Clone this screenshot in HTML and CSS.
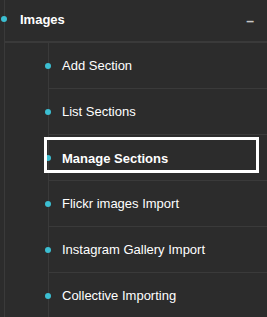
FILE: index.html
```html
<!DOCTYPE html>
<html lang="en">
<head>
    <meta charset="utf-8">
    <title>Images menu</title>
    <link rel="stylesheet" href="styles.css">
</head>
<body>
    <ul class="menu">
        <li class="menu-item">
            <a class="menu-link" href="#">Images<span class="toggle">–</span></a>
            <ul class="submenu">
                <li><a href="#">Add Section</a></li>
                <li><a href="#">List Sections</a></li>
                <li><a class="active" href="#">Manage Sections</a></li>
                <li><a href="#">Flickr images Import</a></li>
                <li><a href="#">Instagram Gallery Import</a></li>
                <li><a href="#">Collective Importing</a></li>
            </ul>
        </li>
    </ul>
</body>
</html>
```

FILE: styles.css
```css
body {
    margin: 0;
    padding: 0;
    background-color: #2c2c2c;
    font-family: "Liberation Sans", Arial, sans-serif;
    font-size: 13px;
    color: #fff;
    overflow: hidden;
}

ul {
    list-style: none;
    margin: 0;
    padding: 0;
}

a {
    color: #fff;
    text-decoration: none;
}

.menu {
    margin-left: 4px;
    border-left: 1px solid #3a3a3a;
    min-height: 100vh;
}

.menu-link {
    position: relative;
    display: flex;
    align-items: center;
    justify-content: space-between;
    height: 39px;
    padding: 0 13px 2px 15px;
    border-bottom: 2px solid #3a3a3a;
    font-weight: bold;
}

.menu-link::before,
.submenu a::before {
    content: "";
    position: absolute;
    width: 6px;
    height: 6px;
    border-radius: 50%;
    background-color: #3cbfd2;
}

.menu-link::before {
    left: -4px;
    top: 16px;
}

.toggle {
    color: #c8c8c8;
    font-size: 14px;
    font-weight: 900;
    padding-top: 3px;
}

.submenu {
    margin-left: 43px;
    border-left: 1px solid #3a3a3a;
}

.submenu li {
    border-bottom: 1px solid #3a3a3a;
}

.submenu a {
    position: relative;
    display: flex;
    align-items: center;
    height: 45px;
    padding-left: 13px;
}

.submenu a::before {
    left: -4px;
    top: 20px;
}

.submenu a.active {
    font-weight: bold;
    padding-top: 1px;
    height: 44px;
}

.submenu a.active::after {
    content: "";
    position: absolute;
    top: 2px;
    left: -5px;
    right: 8px;
    bottom: 7px;
    border: 3px solid #fff;
}
```
